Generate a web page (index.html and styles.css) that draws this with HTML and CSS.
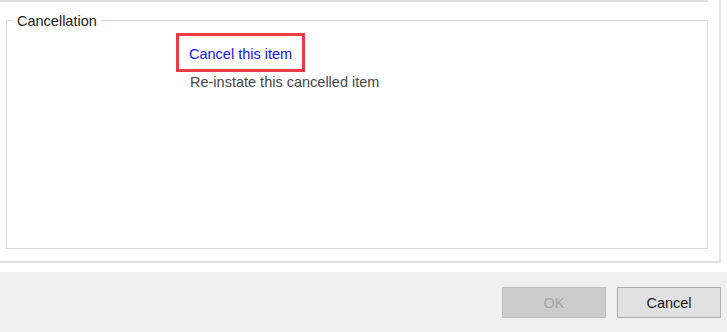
FILE: index.html
```html
<!DOCTYPE html>
<html>
<head>
<meta charset="utf-8">
<link rel="stylesheet" href="styles.css">
</head>
<body>
<div class="dialog">
  <div class="panel">
    <div class="prev-box"></div>
    <fieldset class="group">
      <legend class="group-title">Cancellation</legend>
      <div class="actions">
        <span class="action action-link highlight">Cancel this item</span>
        <span class="action action-disabled">Re-instate this cancelled item</span>
      </div>
    </fieldset>
  </div>
  <div class="footer">
    <button class="btn btn-disabled" disabled>OK</button>
    <button class="btn">Cancel</button>
  </div>
</div>
</body>
</html>
```

FILE: styles.css
```css
html, body {
  margin: 0;
  padding: 0;
  background: #ffffff;
}
body {
  width: 727px;
  height: 332px;
  overflow: hidden;
  font-family: "Liberation Sans", Arial, sans-serif;
  font-size: 14.5px;
  color: #1a1a1a;
}
.dialog {
  display: flex;
  flex-direction: column;
  height: 332px;
}
.panel {
  width: 719px;
  height: 261px;
  border-right: 2px solid #e3e3e3;
  border-bottom: 2px solid #e0e0e0;
  box-sizing: content-box;
  display: flex;
  flex-direction: column;
  background: #ffffff;
}
.prev-box {
  width: 708px;
  height: 0;
  border-bottom: 2px solid #dedede;
}
.group {
  box-sizing: border-box;
  margin: 9px 0 0 6px;
  width: 702px;
  height: 238px;
  border: 1px solid #dadada;
  border-radius: 0;
  padding: 0;
  min-width: 0;
}
.group-title {
  margin-left: 6px;
  padding: 2px 4px 0;
  color: #1a1a1a;
  line-height: 17px;
}
.actions {
  display: flex;
  flex-direction: column;
  align-items: flex-start;
  gap: 11px;
  padding: 16px 0 0 182px;
}
.action {
  line-height: 17px;
}
.action-link {
  color: #1414f5;
}
.action-disabled {
  color: #474747;
  margin-left: 1px;
}
.highlight {
  position: relative;
}
.highlight::after {
  content: "";
  position: absolute;
  left: -13px;
  right: -13px;
  top: -13px;
  bottom: -9px;
  border: 3px solid #ef3b44;
}
.footer {
  margin-top: 9px;
  flex: 1;
  background: #f0f0f0;
  display: flex;
  justify-content: flex-end;
  align-items: flex-start;
  gap: 11px;
  padding: 15px 6px 0 0;
}
.btn {
  width: 104px;
  height: 31px;
  margin: 0;
  padding: 0;
  font-family: "Liberation Sans", Arial, sans-serif;
  font-size: 14.5px;
  background: #e1e1e1;
  border: 1px solid #adadad;
  color: #1a1a1a;
  border-radius: 0;
}
.btn-disabled {
  background: #cccccc;
  border-color: #bfbfbf;
  color: #a3a3a3;
}
```
